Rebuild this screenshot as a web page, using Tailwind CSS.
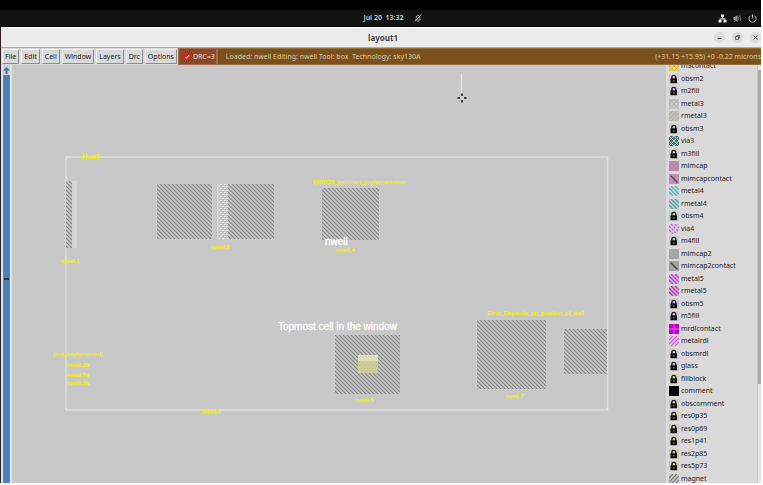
<!DOCTYPE html>
<html lang="en">
<head>
<meta charset="utf-8">
<title>layout1</title>
<script src="https://cdn.jsdelivr.net/npm/@tailwindcss/browser@4"></script>
</head>
<body class="bg-white font-['Noto_Sans',sans-serif] text-[7px] leading-[10px] text-[#222]">
<div class="flex h-screen flex-col pr-[2px] pb-[2px]">
  <div class="h-[10px] shrink-0 bg-black"></div>
  <header class="grid h-[16px] shrink-0 grid-cols-[1fr_auto_1fr] items-center bg-[#131313] text-[#d0d0d0]">
    <span></span>
    <div class="flex items-center gap-[10px] pl-[24px]">
      <time class="font-semibold whitespace-pre">Jul 20  13:32</time>
      <svg class="size-[8px]" viewBox="0 0 16 16" fill="none" stroke="#c4c4c4" stroke-width="1.6" aria-label="Notifications off"><path d="M3 12h10c-1.500-1-1.500-3-1.500-5.500a3.500 3.500 0 0 0-7 0C4.500 9 4.500 11 3 12zM6.500 14.500h3M1.500 15L14.500 1"/></svg>
    </div>
    <div class="flex items-center justify-end gap-[6px] pr-[4px]">
      <svg class="size-[9px]" viewBox="0 0 18 18" fill="#eee" aria-label="Network"><path d="M6 1h6v5H10v3h5v3h2v5h-6v-5h2v-1H5v1h2v5H1v-5h2V9h5V6H6z"/></svg>
      <svg class="size-[9px]" viewBox="0 0 18 18" aria-label="Muted"><path fill="#999" d="M1 6h3l5-4v14l-5-4H1z"/><path fill="none" stroke="#777" stroke-width="1.800" d="M11 6q2 3 0 6M14 4q3 5 0 10M2 16L15 2"/></svg>
      <svg class="size-[9px]" viewBox="0 0 18 18" fill="none" stroke="#bbb" stroke-width="2" aria-label="Power"><path d="M9 1v8M5 3.500a7 7 0 1 0 8 0"/></svg>
    </div>
  </header>
  <div class="flex min-h-0 flex-1 flex-col border-t border-l border-t-black border-l-[#2c2024]">
    <div class="grid h-[20px] shrink-0 grid-cols-[1fr_auto_1fr] items-center border-t border-white bg-[#ebebeb]">
      <span></span>
      <h1 class="pl-[4px] text-[8px] font-bold text-[#444]">layout1</h1>
      <div class="flex justify-end gap-[7px]">
        <button aria-label="Minimize" class="grid size-[11px] place-items-center rounded-full bg-[#dcdcdc]"><svg class="size-[7px]" viewBox="0 0 7 7" stroke="#444"><path d="M1.500 4.500h4"/></svg></button>
        <button aria-label="Restore" class="grid size-[11px] place-items-center rounded-full bg-[#dcdcdc]"><svg class="size-[7px]" viewBox="0 0 14 14" fill="none" stroke="#444" stroke-width="1.500"><path d="M3 5h6v6H3zM5 3h6v6"/></svg></button>
        <button aria-label="Close" class="grid size-[11px] place-items-center rounded-full bg-[#dcdcdc]"><svg class="size-[7px]" viewBox="0 0 7 7" stroke="#333"><path d="M1.500 1.500l4 4M5.500 1.500l-4 4"/></svg></button>
      </div>
    </div>
    <div class="flex h-[18px] shrink-0 border-t border-[#aaa] bg-[#d9d9d9]">
      <nav class="flex gap-[2px] py-px pr-px pl-px">
        <button class="border border-t-[#f4f4f4] border-r-[#8c8c8c] border-b-[#8c8c8c] border-l-[#f4f4f4] px-[2px]">File</button>
        <button class="border border-t-[#f4f4f4] border-r-[#8c8c8c] border-b-[#8c8c8c] border-l-[#f4f4f4] px-[2px]">Edit</button>
        <button class="border border-t-[#f4f4f4] border-r-[#8c8c8c] border-b-[#8c8c8c] border-l-[#f4f4f4] px-[2px]">Cell</button>
        <button class="border border-t-[#f4f4f4] border-r-[#8c8c8c] border-b-[#8c8c8c] border-l-[#f4f4f4] px-[2px]">Window</button>
        <button class="border border-t-[#f4f4f4] border-r-[#8c8c8c] border-b-[#8c8c8c] border-l-[#f4f4f4] px-[2px]">Layers</button>
        <button class="border border-t-[#f4f4f4] border-r-[#8c8c8c] border-b-[#8c8c8c] border-l-[#f4f4f4] px-[2px]">Drc</button>
        <button class="border border-t-[#f4f4f4] border-r-[#8c8c8c] border-b-[#8c8c8c] border-l-[#f4f4f4] px-[2px]">Options</button>
      </nav>
      <label for="drc" class="flex items-center gap-[3px] border border-[#a96b50] bg-[#8b4726] pr-px pl-[5px] text-[#f0dcd0]">
        <span class="relative block size-[6px]">
          <input id="drc" type="checkbox" checked class="block size-[6px] appearance-none bg-[#f01818]">
          <svg class="pointer-events-none absolute inset-0 size-[6px]" viewBox="0 0 6 6" fill="none" stroke="#fff" stroke-width="1"><path d="M1 3l1.500 1.500L5 1"/></svg>
        </span>DRC=3</label>
      <div class="flex min-w-0 flex-1 items-center justify-between overflow-hidden border border-r-0 border-[#94703c] bg-[#7b501d] pl-[8px] whitespace-pre text-[#d6c8a6]">
        <span>Loaded: nwell Editing: nwell Tool: box  Technology: sky130A</span>
        <span>(+31.15 +15.95) +0 -0.22 microns</span>
      </div>
    </div>
    <main class="flex min-h-0 flex-1 bg-[#c8c8c8]">
      <div class="flex w-[11px] shrink-0 flex-col border-r-2 border-l-2 border-r-[#e4e4e4] border-l-[#e4e4e4]">
        <button aria-label="Scroll up" class="grid h-[10px] shrink-0 place-items-center bg-[#cfcfcf]"><svg class="size-[7px]" viewBox="0 0 7 7" fill="#3478b8"><path d="M3.500 0L7 3.500H4.500V7h-2V3.500H0z"/></svg></button>
        <div class="flex flex-1 flex-col justify-center border border-y-0 border-[#5b8ab5] bg-[#4881b5]"><div class="h-[2px] bg-[#1d3b56]"></div></div>
      </div>
      <svg class="h-full min-w-0 flex-1" viewBox="12 65 654 418" role="img" aria-label="Layout of cell nwell">
        <defs>
          <pattern id="hatch" width="4" height="4" patternUnits="userSpaceOnUse"><path d="M-1-1L5 5M-1 3L1 5M3-1L5 1" stroke="#848484" stroke-width="1.200"/></pattern>
          <pattern id="dots" width="4" height="4" patternUnits="userSpaceOnUse"><path d="M0 0h2v1H0zM2 2h2v1H2z" fill="#e8e8e8"/></pattern>
        </defs>
        <path d="M66 157H607.500V410H66z" fill="none" stroke="#dedede" stroke-width="1.500"/>
        <path d="M72 181h5v67h-5z" fill="#d6d6d6"/>
        <g fill="url(#hatch)">
          <path d="M66 181h6v67h-6zM157 184h55v55h-55zM218 184h56v55h-56zM322 188h57v52h-57zM335 335h65v59h-65zM477 320h69v69h-69zM564 329h43v45h-43z"/>
        </g>
        <path d="M217 184h11v55h-11z" fill="#d4d4d4" fill-opacity=".5"/>
        <path d="M217 184h11v55h-11z" fill="url(#dots)"/>
        <path d="M358 355h20v6h-20z" fill="#dedeb8"/>
        <path d="M358 361h20v12h-20z" fill="#cece94" fill-opacity=".9"/>
        <g font-family="'Liberation Sans',sans-serif" font-size="6" fill="#eeee18" stroke="#eeee18" stroke-width=".25">
          <text x="82" y="159" font-size="7">Nwell</text>
          <text x="61" y="263">nwell.1</text>
          <text x="211" y="249">nwell.2</text>
          <text x="313" y="184">ERROR_incorrect_implementation</text>
          <text x="336" y="252">nwell.4</text>
          <text x="53" y="356">(not_implemented)</text>
          <text x="67" y="367">nwell.2b</text>
          <text x="67" y="377">nwell.5a</text>
          <text x="67" y="385">nwell.5b</text>
          <text x="202" y="413">nwell.5</text>
          <text x="355" y="402">nwell.6</text>
          <text x="487" y="315">Error_Depends_on_position_of_well</text>
          <text x="505" y="398">nwell.7</text>
        </g>
        <g font-family="'Liberation Sans',sans-serif" font-size="10" fill="#fff" stroke="#fff" stroke-width=".3">
          <text x="325" y="245">nwell</text>
          <text x="278" y="330">Topmost cell in the window</text>
        </g>
        <path d="M461.500 74v19" stroke="#e6e6e6" stroke-width="1.500"/>
        <path d="M462 93.500v3M462 99.500v3M457.500 98h3M463.500 98h3" stroke="#111" stroke-width="1.500"/>
        <circle cx="462" cy="98" r="1.500" fill="none" stroke="#eee" stroke-width=".8"/>
      </svg>
      <aside class="flex w-[95px] shrink-0 overflow-hidden bg-[#d9d9d9]" aria-label="Layers">
        <ul id="layers" class="-mt-[5px] -mb-[2px] flex min-w-0 flex-1 flex-col pl-[3px]"></ul>
        <div class="flex w-[4px] flex-col border-l border-[#c4c4c4] bg-[#e4e4e4]"><div class="mt-[5px] h-3/4 bg-[#a8a8a8]"></div></div>
      </aside>
    </main>
  </div>
</div>
<script>
  // name, swatch kind, background, ink
  const layers = [
    ['m3contact','cross','#e8dc50','#d8b080'],['obsm2','lock','#d8ccd4'],['m2fill','lock','#d8ccd4'],
    ['metal3','cross','#c6c6c6','#b4b4b4'],['rmetal3','slash','#c8c2bc','#b8aea6'],['obsm3','lock','#cccccc'],
    ['via3','cross','#4c7470','#b0d8d4'],['m3fill','lock','#cccccc'],['mimcap','cross','#c090b0','#b080a0'],
    ['mimcapcontact','line','#c090b0','#503848'],['metal4','back','#cfdcdc','#5cb4b4'],['rmetal4','back','#c4d4d0','#50a898'],
    ['obsm4','lock','#c4d0d0'],['via4','dash','#e0d0e4','#b868cc'],['m4fill','lock','#c4d0d0'],
    ['mimcap2','back','#aaaaaa','#a0a0a0'],['mimcap2contact','line','#a4a4a4','#444444'],['metal5','back','#dcc4e0','#b440cc'],
    ['rmetal5','back','#d8c0d8','#b030b0'],['obsm5','lock','#d0c4d4'],['m5fill','lock','#d0c4d4'],
    ['mrdlcontact','grid','#c000c8','#e060e8'],['metalrdl','slash','#e0cce0','#d858c8'],['obsmrdl','lock','#dcc8d8'],
    ['glass','lock','#cccccc'],['fillblock','lock','#d4d4b8'],['comment','solid','#000000'],['obscomment','lock','#cccccc'],
    ['res0p35','lock','#d0ccb8'],['res0p69','lock','#d0ccb8'],['res1p41','lock','#d0ccb8'],['res2p85','lock','#d0ccb8'],
    ['res5p73','lock','#d0ccb8'],['magnet','slash','#cccccc','#777777']
  ];
  const art = {
    lock: () => '<rect x="1.500" y="4.300" width="6.500" height="4.900" fill="#111"/><path d="M2.900 5V3.200a1.900 1.900 0 0 1 3.800 0V5" fill="none" stroke="#111" stroke-width="1.300"/><path d="M4.800 6v1.500" stroke="#bbb" stroke-width=".8"/>',
    cross: c => `<path d="M0 5L5 0L10 5L5 10zM0 0L10 10M10 0L0 10" fill="none" stroke="${c}" stroke-width="1"/>`,
    slash: c => `<path d="M0 4L4 0M0 8L8 0M2 10L10 2M6 10L10 6" stroke="${c}" stroke-width="1.200"/>`,
    back: c => `<path d="M6 0L10 4M2 0L10 8M0 2L8 10M0 6L4 10" stroke="${c}" stroke-width="1.400"/>`,
    dash: c => `<path d="M6 0L10 4M2 0L10 8M0 2L8 10M0 6L4 10" stroke="${c}" stroke-width="1.400" stroke-dasharray="2.500 1.200"/>`,
    line: c => `<path d="M1.500 1.500L8.500 8.500" stroke="${c}" stroke-width="1.300"/>`,
    grid: c => `<path d="M5 0V10M0 5H10" stroke="${c}" stroke-width="1"/>`,
    solid: () => ''
  };
  document.getElementById('layers').innerHTML = layers.map(([name, kind, bg, ink]) =>
    `<li class="flex min-h-0 flex-1"><button class="flex items-center gap-[2px]"><svg class="size-[10px]" viewBox="0 0 10 10"><rect width="10" height="10" fill="${bg}"/>${art[kind](ink)}</svg>${name}</button></li>`).join('');
</script>
</body>
</html>
